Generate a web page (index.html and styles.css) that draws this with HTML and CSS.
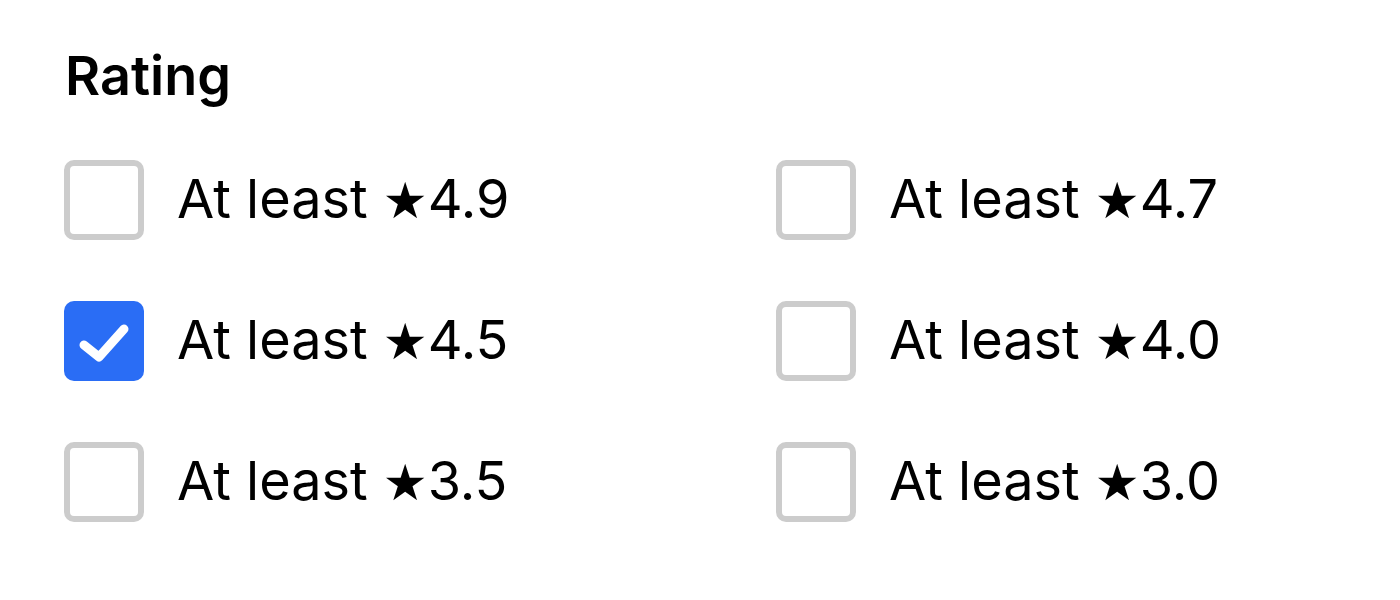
FILE: index.html
```html
<!DOCTYPE html>
<html>
<head>
<meta charset="utf-8">
<link rel="stylesheet" href="styles.css">
</head>
<body>
<section class="filter">
  <h2 class="filter-title">Rating</h2>
  <div class="options">
    <label class="option"><span class="box"></span><span class="label">At least <span class="star">★</span>4.9</span></label>
    <label class="option"><span class="box"></span><span class="label">At least <span class="star">★</span>4.7</span></label>
    <label class="option"><span class="box checked"><svg viewBox="0 0 80 80" width="80" height="80"><path d="M20 44 L35 56 L60 28" fill="none" stroke="#fff" stroke-width="9" stroke-linecap="round" stroke-linejoin="round"/></svg></span><span class="label">At least <span class="star">★</span>4.5</span></label>
    <label class="option"><span class="box"></span><span class="label">At least <span class="star">★</span>4.0</span></label>
    <label class="option"><span class="box"></span><span class="label">At least <span class="star">★</span>3.5</span></label>
    <label class="option"><span class="box"></span><span class="label">At least <span class="star">★</span>3.0</span></label>
  </div>
</section>
</body>
</html>
```
FILE: styles.css
```css
html, body {
  margin: 0;
  padding: 0;
  background: #fff;
}
body {
  font-family: Inter, "Liberation Sans", sans-serif;
  color: #000;
}
.filter {
  padding: 40px 0 0 64px;
}
.filter-title {
  margin: 0 0 0 1px;
  font-size: 54px;
  font-weight: 600;
  line-height: 72px;
}
.options {
  margin-top: 48px;
  display: grid;
  grid-template-columns: 712px auto;
  row-gap: 61px;
}
.option {
  display: flex;
  align-items: center;
  gap: 33px;
  height: 80px;
}
.box {
  box-sizing: border-box;
  width: 80px;
  height: 80px;
  border: 6px solid #cccccc;
  border-radius: 10px;
  flex: none;
  display: flex;
}
.box.checked {
  background: #2a6df5;
  border: none;
}
.label {
  font-size: 54px;
  line-height: 80px;
}
.star {
  font-family: "DejaVu Sans", sans-serif;
  font-size: 50px;
}
```
